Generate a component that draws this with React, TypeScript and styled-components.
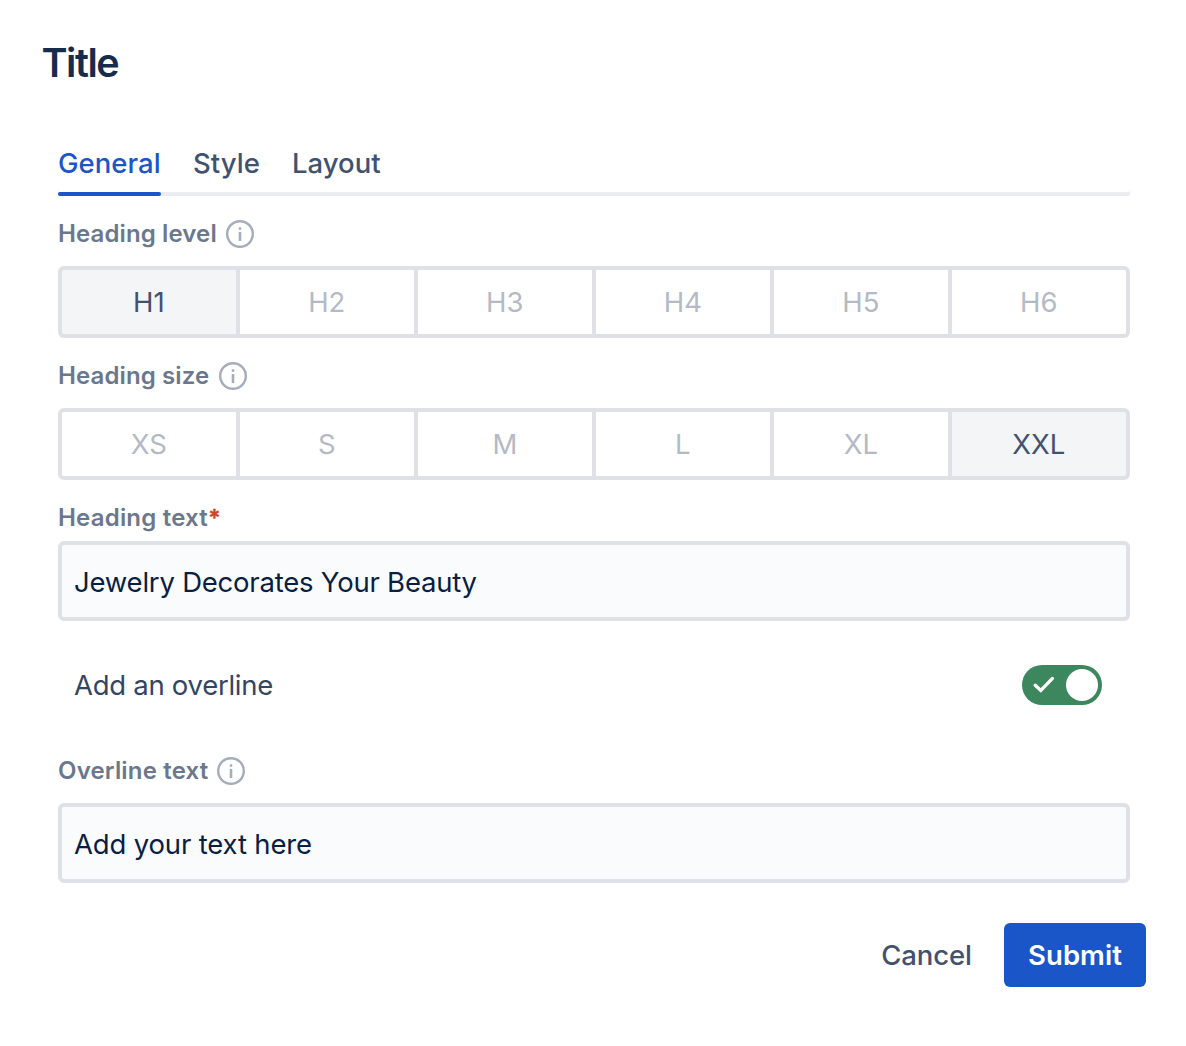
import React, { useState } from "react";
import styled, { createGlobalStyle } from "styled-components";

const GlobalStyle = createGlobalStyle`
  *, *::before, *::after { box-sizing: border-box; }
  body { margin: 0; background: #fff; }
  button, input { font: inherit; letter-spacing: inherit; margin: 0; }
`;

const Dialog = styled.form`
  width: 1186px;
  height: 1046px;
  display: flex;
  flex-direction: column;
  background: #ffffff;
  font-family: Inter, "Liberation Sans", sans-serif;
  font-size: 28px;
  color: #172b4d;
`;

const Heading = styled.h1`
  margin: 0;
  padding: 39px 0 0 41.5px;
  height: 136px;
  font-size: 39.5px;
  line-height: 48px;
  font-weight: 600;
  letter-spacing: -1.5px;
  color: #172b4d;
`;

const Body = styled.div`
  display: flex;
  flex-direction: column;
  padding: 0 56px 0 58px;
`;

const TabBar = styled.div`
  display: flex;
  gap: 32px;
  height: 60px;
  border-radius: 2px;
  box-shadow: inset 0 -4px #ebecf0;
`;

const Tab = styled.button<{ $active: boolean; $width: number }>`
  position: relative;
  width: ${(p) => p.$width}px;
  padding: 10px 0 0;
  border: 0;
  background: none;
  display: flex;
  white-space: nowrap;
  line-height: 34px;
  font-size: 27.5px;
  font-weight: 550;
  letter-spacing: 0.03px;
  color: ${(p) => (p.$active ? "#1a56c8" : "#42526e")};

  &::after {
    content: "";
    position: absolute;
    left: 0;
    right: 0;
    bottom: 0;
    height: 4px;
    border-radius: 2px;
    background: ${(p) => (p.$active ? "#1a56c8" : "transparent")};
  }
`;

const Label = styled.div<{ $top: number; $bottom: number; $spacing: number }>`
  display: flex;
  align-items: center;
  height: 28px;
  margin: ${(p) => p.$top}px 0 ${(p) => p.$bottom}px;
  font-size: 24px;
  line-height: 28px;
  font-weight: 600;
  letter-spacing: ${(p) => p.$spacing}px;
  color: #6b778c;
`;

const LabelText = styled.span<{ $width?: number }>`
  width: ${(p) => (p.$width ? `${p.$width}px` : "auto")};
  white-space: nowrap;
`;

const Required = styled.span`
  font-size: 23px;
  font-weight: 700;
  line-height: 1;
  -webkit-text-stroke: 0.3px #d04423;
  color: #d04423;
`;

const Segments = styled.div`
  display: grid;
  grid-template-columns: repeat(6, 1fr);
  gap: 4px;
  height: 72px;
  padding: 4px;
  border-radius: 6px;
  background: #dfe1e6;
`;

const Segment = styled.button<{ $active: boolean }>`
  padding: 0 0.4px 0 0;
  border: 0;
  background: ${(p) => (p.$active ? "#f4f5f7" : "#ffffff")};
  color: ${(p) => (p.$active ? "#42526e" : "#b3bac5")};
  font-size: 27.5px;
  font-weight: 430;
  line-height: 34px;
  letter-spacing: 0;

  &:first-child { border-radius: 2px 0 0 2px; }
  &:last-child { border-radius: 0 2px 2px 0; }
`;

const TextField = styled.input<{ $spacing: number }>`
  width: 100%;
  height: 80px;
  padding: 2px 12px 0;
  border: 4px solid #dfe1e6;
  border-radius: 6px;
  outline: 0;
  background: #fafbfc;
  color: #091e42;
  font-size: 27.5px;
  font-weight: 430;
  letter-spacing: ${(p) => p.$spacing}px;
`;

const ToggleRow = styled.div`
  display: flex;
  align-items: center;
  justify-content: space-between;
  height: 40px;
  margin-top: 44px;
  padding: 0 28px 0 16px;
`;

const ToggleLabel = styled.span`
  padding-bottom: 1px;
  font-size: 27.5px;
  font-weight: 430;
  color: #344563;
  letter-spacing: -0.28px;
`;

const Switch = styled.button<{ $on: boolean }>`
  display: flex;
  flex-direction: ${(p) => (p.$on ? "row" : "row-reverse")};
  align-items: center;
  justify-content: space-between;
  width: 80px;
  height: 40px;
  padding: 4px 4px 4px 10px;
  border: 0;
  border-radius: 20px;
  background: ${(p) => (p.$on ? "#3d875e" : "#6b778c")};
`;

const Knob = styled.span`
  width: 32px;
  height: 32px;
  border-radius: 50%;
  background: #ffffff;
`;

const Footer = styled.div`
  display: flex;
  justify-content: flex-end;
  gap: 8px;
  padding: 40px 40px 0;
`;

const Action = styled.button<{ $primary?: boolean }>`
  width: ${(p) => (p.$primary ? 142 : 138)}px;
  height: 64px;
  padding: ${(p) => (p.$primary ? "0 0 1px" : "0 1px 1px 0")};
  border: 0;
  border-radius: 6px;
  background: ${(p) => (p.$primary ? "#1a56c8" : "transparent")};
  color: ${(p) => (p.$primary ? "#ffffff" : "#42526e")};
  font-size: 27.5px;
  font-weight: ${(p) => (p.$primary ? 600 : 550)};
  letter-spacing: ${(p) => (p.$primary ? 0.05 : -0.1)}px;
`;

const InfoIcon = () => (
  <svg width="28" height="28" viewBox="0 0 28 28" fill="none" aria-hidden="true">
    <circle cx="14" cy="14" r="12.8" stroke="#a5adba" strokeWidth="2.4" />
    <rect x="12.7" y="7.2" width="2.6" height="2.6" rx="0.6" fill="#a5adba" />
    <rect x="12.7" y="12" width="2.6" height="9" rx="0.6" fill="#a5adba" />
  </svg>
);

const CheckIcon = () => (
  <svg width="24" height="24" viewBox="0 0 24 24" fill="none" aria-hidden="true">
    <path d="M3.2 12.2 L8.8 17.4 L20.5 5.4" stroke="#ffffff" strokeWidth="3.3" strokeLinecap="round" strokeLinejoin="miter" />
  </svg>
);

const tabs = [
  { name: "General", width: 103 },
  { name: "Style", width: 67 },
  { name: "Layout", width: 90 },
];
const levels = ["H1", "H2", "H3", "H4", "H5", "H6"];
const sizes = ["XS", "S", "M", "L", "XL", "XXL"];

interface ChoiceProps {
  options: string[];
  value: string;
  onChange: (value: string) => void;
}

const Choice = ({ options, value, onChange }: ChoiceProps) => (
  <Segments>
    {options.map((option) => (
      <Segment key={option} type="button" $active={option === value} onClick={() => onChange(option)}>
        {option}
      </Segment>
    ))}
  </Segments>
);

export default function App() {
  const [tab, setTab] = useState("General");
  const [level, setLevel] = useState("H1");
  const [size, setSize] = useState("XXL");
  const [overline, setOverline] = useState(true);

  return (
    <Dialog onSubmit={(e) => e.preventDefault()}>
      <GlobalStyle />
      <Heading>Title</Heading>
      <Body>
        <TabBar>
          {tabs.map(({ name, width }) => (
            <Tab key={name} type="button" $active={name === tab} $width={width} onClick={() => setTab(name)}>
              {name}
            </Tab>
          ))}
        </TabBar>
        <Label $top={24} $bottom={18} $spacing={0.12}>
          <LabelText $width={168}>Heading level</LabelText>
          <InfoIcon />
        </Label>
        <Choice options={levels} value={level} onChange={setLevel} />
        <Label $top={24} $bottom={18} $spacing={0.12}>
          <LabelText $width={160.5}>Heading size</LabelText>
          <InfoIcon />
        </Label>
        <Choice options={sizes} value={size} onChange={setSize} />
        <Label $top={24} $bottom={9} $spacing={0.2}>
          <LabelText>
            Heading text<Required>*</Required>
          </LabelText>
        </Label>
        <TextField defaultValue="Jewelry Decorates Your Beauty" $spacing={-0.22} />
        <ToggleRow>
          <ToggleLabel>Add an overline</ToggleLabel>
          <Switch type="button" role="switch" aria-checked={overline} $on={overline} onClick={() => setOverline(!overline)}>
            <CheckIcon />
            <Knob />
          </Switch>
        </ToggleRow>
        <Label $top={52} $bottom={18} $spacing={0.18}>
          <LabelText $width={159}>Overline text</LabelText>
          <InfoIcon />
        </Label>
        <TextField defaultValue="Add your text here" $spacing={-0.16} />
      </Body>
      <Footer>
        <Action type="button">Cancel</Action>
        <Action type="submit" $primary>Submit</Action>
      </Footer>
    </Dialog>
  );
}
